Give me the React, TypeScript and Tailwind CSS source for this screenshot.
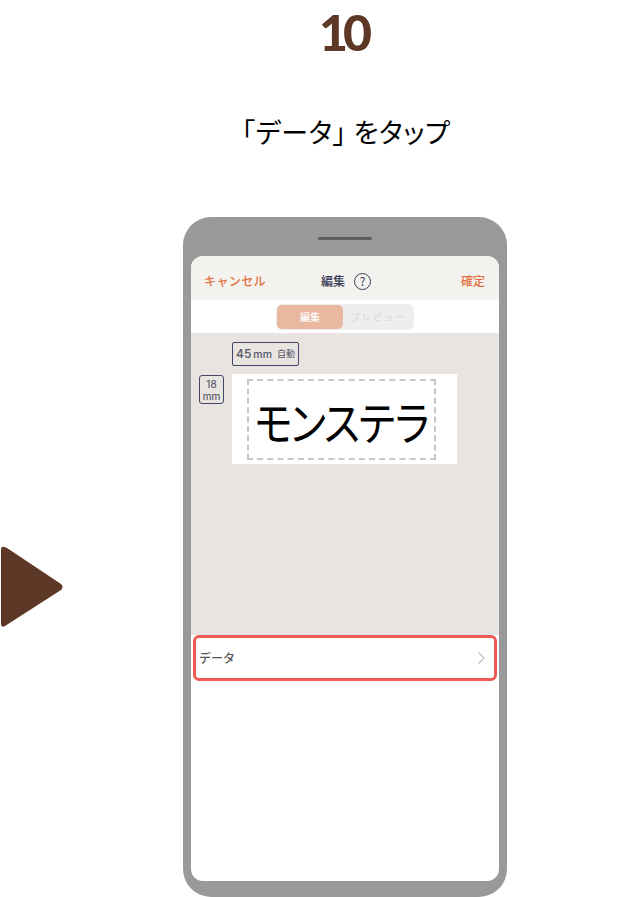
import React from 'react';

const jp = "font-['Noto_Sans_CJK_JP','Noto_Sans',sans-serif]";

export default function App() {
  return (
    <div className={`w-[620px] h-[897px] bg-white overflow-hidden ${jp}`}>
      {/* 見出し */}
      <div className="h-[217px] pl-[72px] flex flex-col items-center">
        <div className="h-[64px] pr-[1px] text-[50px] leading-[64px] font-['Lato',sans-serif] font-black text-[#5e3826]"><span className="tracking-[-5px]">1</span>0</div>
        <div className="mt-[49px] text-[27px] leading-[38px] text-black [font-feature-settings:'palt'] tracking-[0.6px] whitespace-pre">「データ」 をタップ</div>
      </div>

      <div className="flex">
        {/* 矢印 */}
        <div className="w-[183px] pt-[329px] shrink-0">
          <svg width="64" height="82" viewBox="0 0 64 82">
            <path d="M4 1 Q1 0 1 4 V78 Q1 82 5 80 L61 44 Q64 41 61 38 L7 2 Q5 1 4 1 Z" fill="#5e3826" />
          </svg>
        </div>

        {/* 端末 */}
        <div className="w-[324px] h-[680px] bg-[#999999] rounded-[28px] px-[8px] pt-[20px] pb-[16px] flex flex-col">
          <div className="w-[54px] h-[3px] bg-[#5f5f5f] mx-auto rounded-full shrink-0" />
          <div className="mt-[16px] flex-1 bg-white rounded-[12px] overflow-hidden flex flex-col">
            {/* ヘッダー */}
            <div className="h-[44px] bg-[#f4f2ef] flex items-center px-[13px] pt-[6px] text-[12px] font-medium text-[#e0703d] shrink-0">
              <span className="w-[117px] tracking-[0.4px]">キャンセル</span>
              <div className="flex items-center gap-[9px] text-[#3a3a55]">
                <span>編集</span>
                <span className="w-[17px] h-[17px] rounded-full border border-[#3a3a55] flex items-center justify-center text-[12px] font-normal leading-none">?</span>
              </div>
              <span className="ml-auto mr-[1px]">確定</span>
            </div>

            {/* タブ */}
            <div className="h-[33px] flex items-center justify-center shrink-0">
              <div className="w-[138px] h-[26px] bg-[#eeeeee] rounded-[6px] p-[1px] flex text-[10px] font-medium">
                <div className="w-[66px] bg-[#e9b8a1] rounded-[5px] flex items-center justify-center text-white">編集</div>
                <div className="flex-1 flex items-center justify-center text-[#dcdcdc] tracking-[1px]">プレビュー</div>
              </div>
            </div>

            {/* プレビュー領域 */}
            <div className="flex-1 bg-[#e8e4e0] pl-[8px] pt-[9px]">
              <div className="ml-[33px] w-[67px] h-[24px] border border-[#45456a] rounded-[2px] flex items-center justify-center gap-[5px] text-[#55556a]">
                <span className="text-[12px] font-['Inter',sans-serif] font-medium">45<span className="text-[10.5px] ml-[2px]">mm</span></span>
                <span className="text-[9px]">自動</span>
              </div>
              <div className="flex mt-[8px]">
                <div className="w-[25px] h-[29px] mt-[1px] border border-[#45456a] rounded-[3px] flex flex-col items-center justify-center font-['Inter',sans-serif] text-[10px] leading-[12px] text-[#45455a]">
                  <span>18</span>
                  <span>mm</span>
                </div>
                <div className="ml-[8px] w-[225px] h-[90px] bg-white pl-[15px] pt-[5px]">
                  <div className="w-[189px] h-[81px] border-2 border-dashed border-[#c6c6cc] flex items-center justify-center">
                    <span className="text-[40px] leading-none font-normal text-black tracking-[-5px] pr-[3px] whitespace-nowrap scale-y-[1.15]">モンステラ</span>
                  </div>
                </div>
              </div>
            </div>

            {/* データ行 */}
            <div className="h-[46px] mx-[2px] border-[3px] border-[#ee5a55] rounded-[6px] bg-white flex items-center justify-between pl-[3px] pr-[8px] pb-[1px] shrink-0">
              <span className="text-[12px] font-medium text-[#555555]">データ</span>
              <svg width="9" height="14" viewBox="0 0 9 14" fill="none" stroke="#c4c4c4" strokeWidth="1.4">
                <path d="M1.5 1.5 L7 7 L1.5 12.5" />
              </svg>
            </div>
            <div className="h-[200px] shrink-0" />
          </div>
        </div>
      </div>
    </div>
  );
}
